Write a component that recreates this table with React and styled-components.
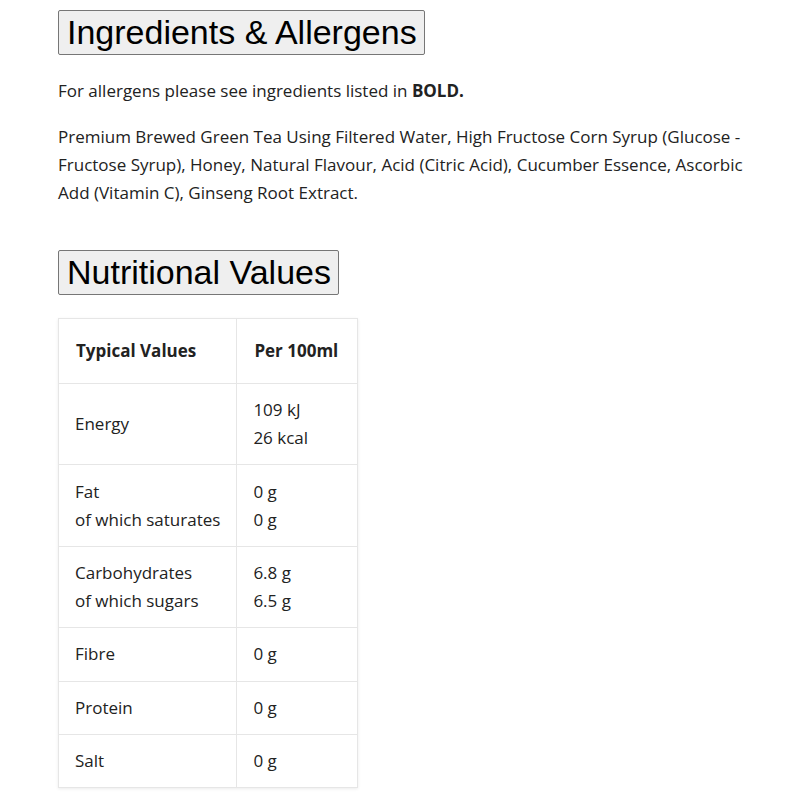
import React from 'react';
import styled, { createGlobalStyle } from 'styled-components';

const GlobalStyle = createGlobalStyle`
  body {
    margin: 0;
    background: #ffffff;
    font-family: "Open Sans", "Noto Sans", sans-serif;
    color: #222222;
  }
`;

const Page = styled.div`
  padding: 10px 30px 12px 58px;
`;

const Section = styled.section`
  margin-bottom: 43px;
`;

const HeadingButton = styled.button`
  display: inline-block;
  font-family: "Liberation Sans", Arial, sans-serif;
  font-size: 34px;
  line-height: 39px;
  color: #000000;
  background: #efefef;
  border: 1px solid #767676;
  border-radius: 2px;
  padding: 2px 7px 2px 8px;
  margin: 0 0 ${p => p.$gap}px;
`;

const Text = styled.p`
  font-size: 17px;
  line-height: 28px;
  margin: 0 0 18px;

  &:last-child {
    margin-bottom: 0;
  }
`;

const Table = styled.table`
  border-collapse: collapse;
  border: 1px solid #e6e6e6;
  box-shadow: 0 1px 3px rgba(0, 0, 0, 0.08);
  font-size: 17px;
  line-height: 28px;
`;

const Cell = styled.td`
  border: 1px solid #e6e6e6;
  padding: 12.2px 16px;
  vertical-align: middle;
  width: ${p => p.$w}px;
  white-space: nowrap;
`;

const HeadCell = styled.th`
  border: 1px solid #e6e6e6;
  padding: 18px 16px 18px 17px;
  text-align: left;
  font-weight: 700;
  font-size: 17px;
`;

const rows = [
  [['Energy'], ['109 kJ', '26 kcal']],
  [['Fat', 'of which saturates'], ['0 g', '0 g']],
  [['Carbohydrates', 'of which sugars'], ['6.8 g', '6.5 g']],
  [['Fibre'], ['0 g']],
  [['Protein'], ['0 g']],
  [['Salt'], ['0 g']],
];

const Lines = ({ items }) => items.map((l, i) => <div key={i}>{l}</div>);

export default function App() {
  return (
    <Page>
      <GlobalStyle />
      <Section>
        <HeadingButton $gap={22}>Ingredients &amp; Allergens</HeadingButton>
        <Text>For allergens please see ingredients listed in <b>BOLD.</b></Text>
        <Text>
          Premium Brewed Green Tea Using Filtered Water, High Fructose Corn Syrup (Glucose - Fructose Syrup), Honey, Natural Flavour, Acid (Citric Acid), Cucumber Essence, Ascorbic Add (Vitamin C), Ginseng Root Extract.
        </Text>
      </Section>
      <section>
        <HeadingButton $gap={23}>Nutritional Values</HeadingButton>
        <Table>
          <thead>
            <tr>
              <HeadCell>Typical Values</HeadCell>
              <HeadCell>Per 100ml</HeadCell>
            </tr>
          </thead>
          <tbody>
            {rows.map((r, i) => (
              <tr key={i}>
                <Cell $w={143}><Lines items={r[0]} /></Cell>
                <Cell $w={88}><Lines items={r[1]} /></Cell>
              </tr>
            ))}
          </tbody>
        </Table>
      </section>
    </Page>
  );
}
